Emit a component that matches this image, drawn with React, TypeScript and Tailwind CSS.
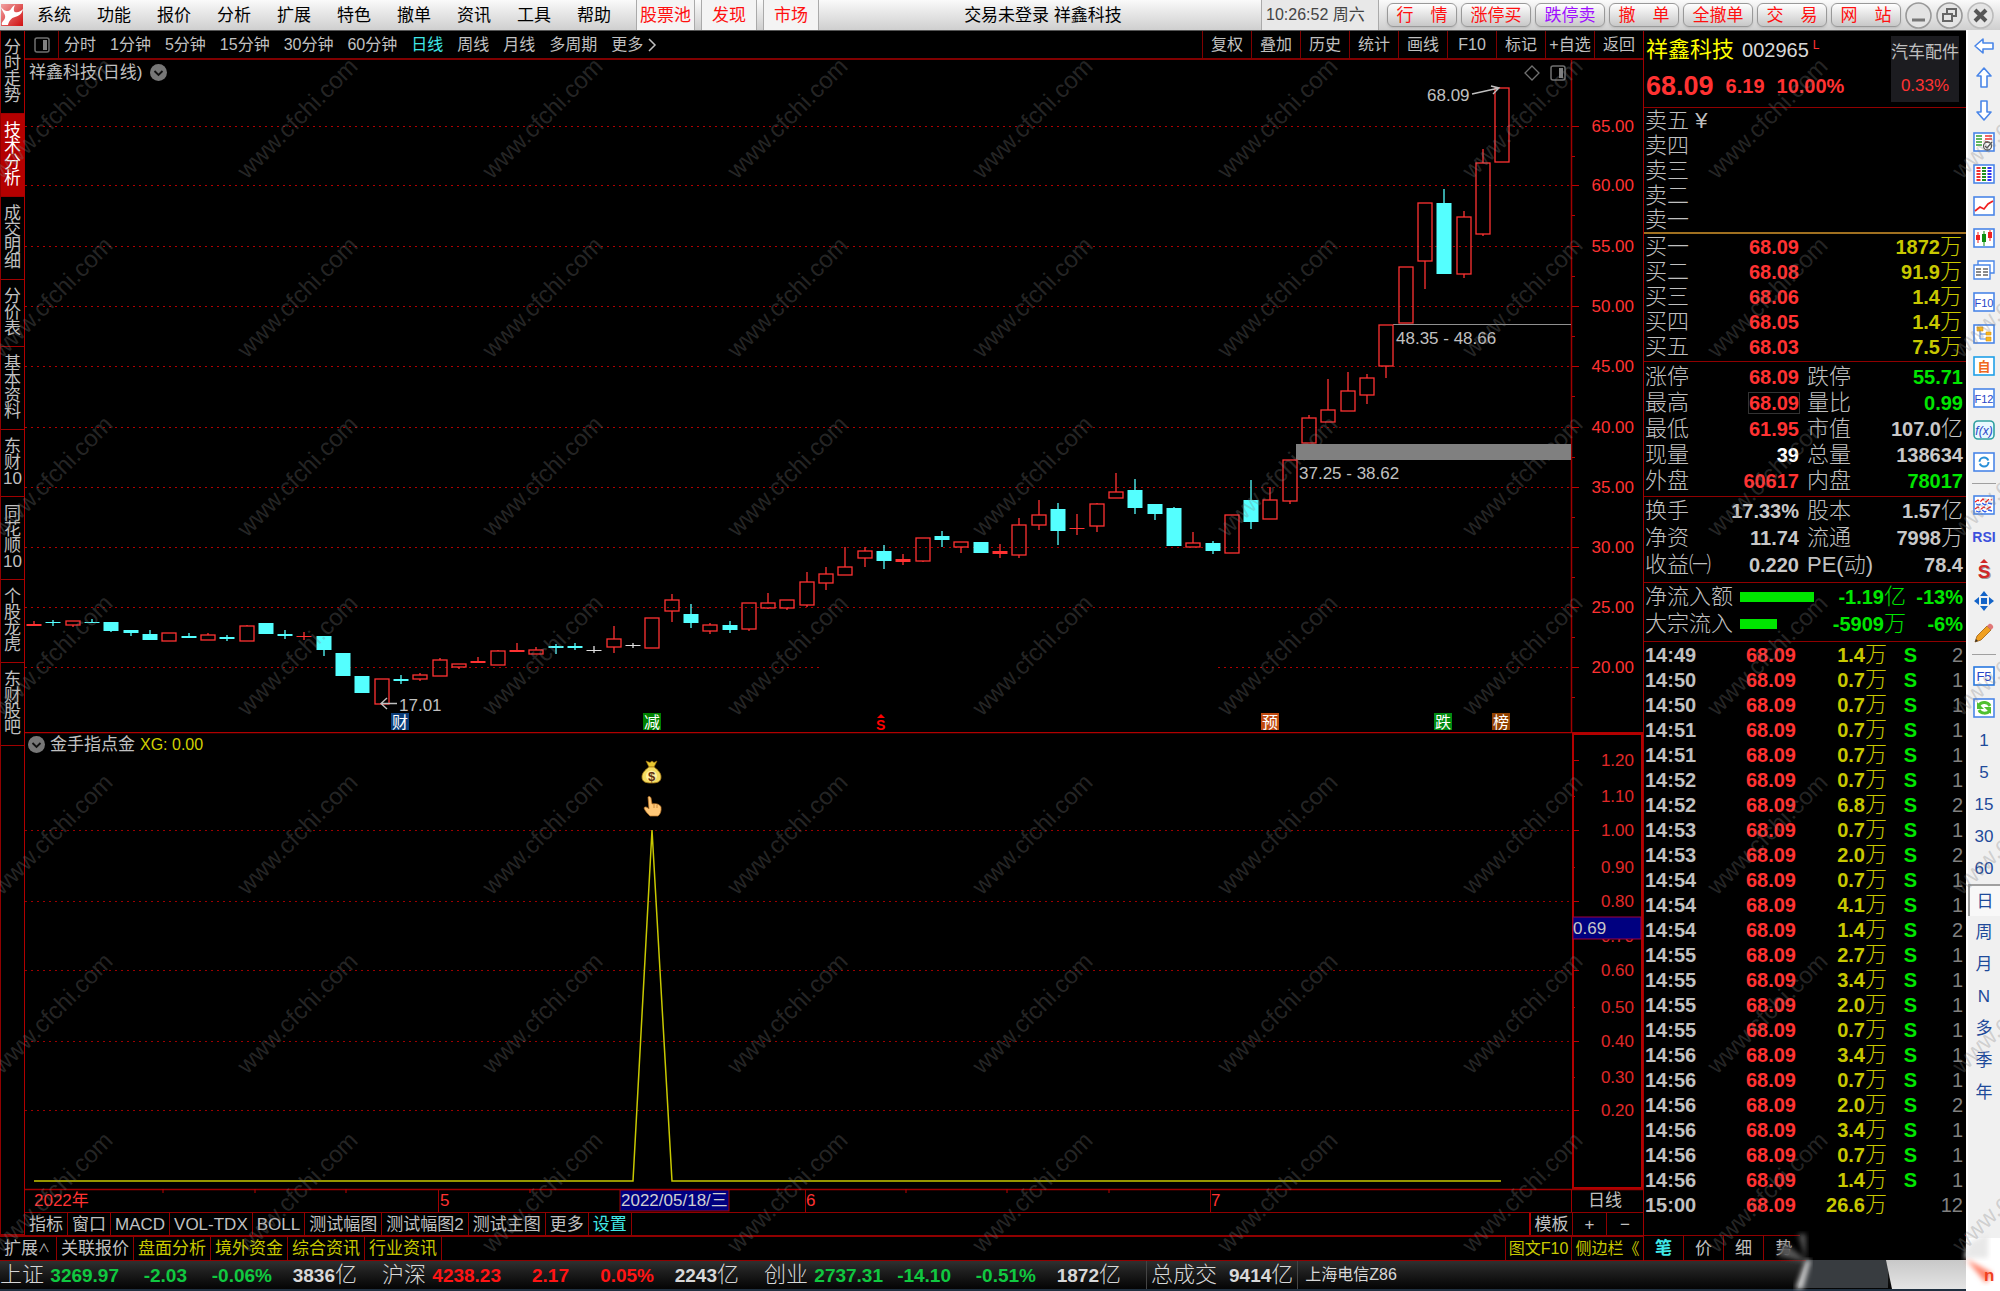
import React from 'react';
import clsx from 'clsx';

const MENU = ['系统', '功能', '报价', '分析', '扩展', '特色', '撤单', '资讯', '工具', '帮助'];
const HOT_MENU = ['股票池', '发现', '市场'];
const QUICK = ['行　情', '涨停买', '跌停卖', '撤　单', '全撤单', '交　易', '网　站'];
const PERIODS = ['分时', '1分钟', '5分钟', '15分钟', '30分钟', '60分钟', '日线', '周线', '月线', '多周期'];
const TOOLS = ['复权', '叠加', '历史', '统计', '画线', 'F10', '标记', '+自选', '返回'];

const SIDE_TABS = [
  ['分', '时', '走', '势'],
  ['技', '术', '分', '析'],
  ['成', '交', '明', '细'],
  ['分', '价', '表'],
  ['基', '本', '资', '料'],
  ['东', '财', '10'],
  ['同', '花', '顺', '10'],
  ['个', '股', '龙', '虎'],
  ['东', '财', '股', '吧'],
];

const INDICATORS = ['指标', '窗口', 'MACD', 'VOL-TDX', 'BOLL', '测试幅图', '测试幅图2', '测试主图', '更多', '设置'];
const EXTENSIONS = ['关联报价', '盘面分析', '境外资金', '综合资讯', '行业资讯'];

// kind, high, body top, body bottom, low
// u = up (hollow red), f = flat up (solid red), d = down (solid cyan), c = doji (white)
type Candle = [string, number, number, number, number];
const CANDLES: Candle[] = [
  ['f', 621, 624, 626, 626], ['d', 620, 622, 623, 626], ['u', 621, 621, 625, 627], ['d', 619, 622, 623, 623],
  ['d', 622, 622, 631, 632], ['d', 630, 630, 633, 636], ['d', 630, 634, 640, 640], ['u', 633, 633, 641, 641],
  ['d', 633, 636, 638, 638], ['u', 633, 635, 640, 640], ['d', 635, 637, 639, 641], ['u', 625, 626, 641, 641],
  ['d', 623, 623, 634, 634], ['d', 630, 634, 636, 639], ['f', 632, 636, 637, 640], ['d', 636, 636, 650, 656],
  ['d', 653, 653, 676, 676], ['d', 676, 676, 693, 693], ['u', 679, 679, 704, 704], ['d', 675, 679, 681, 684],
  ['u', 673, 675, 679, 681], ['u', 658, 660, 676, 676], ['u', 664, 664, 667, 669], ['f', 657, 661, 663, 663],
  ['u', 650, 651, 665, 665], ['f', 643, 650, 652, 652], ['u', 647, 650, 654, 654], ['d', 644, 646, 648, 654],
  ['d', 643, 646, 648, 650], ['c', 646, 650, 651, 653], ['u', 626, 639, 647, 653], ['c', 643, 645, 646, 648],
  ['u', 618, 618, 648, 648], ['u', 594, 600, 611, 622], ['d', 604, 614, 623, 628], ['u', 623, 625, 631, 634],
  ['d', 621, 625, 630, 633], ['u', 603, 603, 629, 631], ['u', 593, 603, 608, 609], ['u', 600, 600, 608, 610],
  ['u', 572, 582, 605, 607], ['u', 567, 574, 583, 590], ['u', 547, 567, 575, 575], ['u', 547, 551, 558, 567],
  ['d', 545, 551, 561, 569], ['f', 554, 559, 562, 565], ['u', 538, 538, 561, 562], ['d', 531, 536, 540, 547],
  ['u', 542, 542, 547, 553], ['d', 542, 542, 553, 553], ['f', 544, 551, 554, 558], ['u', 518, 525, 555, 558],
  ['u', 500, 515, 525, 530], ['d', 503, 509, 531, 545], ['f', 514, 528, 529, 535], ['u', 503, 504, 526, 532],
  ['u', 473, 492, 498, 498], ['d', 479, 490, 508, 514], ['d', 504, 504, 514, 520], ['d', 507, 508, 546, 546],
  ['u', 532, 543, 547, 547], ['d', 541, 543, 551, 554], ['u', 515, 515, 553, 553], ['d', 480, 500, 522, 529],
  ['u', 487, 500, 519, 519], ['u', 460, 460, 501, 504], ['u', 415, 418, 443, 443], ['u', 379, 410, 422, 422],
  ['u', 372, 391, 411, 411], ['u', 374, 378, 395, 404], ['u', 325, 325, 366, 378], ['u', 267, 267, 323, 323],
  ['u', 203, 203, 261, 289], ['d', 189, 203, 274, 274], ['u', 211, 217, 274, 278], ['u', 149, 163, 234, 236],
  ['u', 88, 88, 162, 162],
];

const PRICE_AXIS = [
  ['65.00', 126], ['60.00', 185], ['55.00', 246], ['50.00', 306], ['45.00', 366],
  ['40.00', 427], ['35.00', 487], ['30.00', 547], ['25.00', 607], ['20.00', 667],
] as const;

const XG_AXIS = [
  ['1.20', 760], ['1.10', 796], ['1.00', 830], ['0.90', 867], ['0.80', 901], ['0.70', 936],
  ['0.60', 970], ['0.50', 1007], ['0.40', 1041], ['0.30', 1077], ['0.20', 1110],
] as const;

const MARKS = [
  ['财', 391, '#0a3c78'], ['减', 643, '#008000'], ['预', 1261, '#c04a10'], ['跌', 1434, '#008a10'], ['榜', 1492, '#904000'],
] as const;

const SELLS = ['卖五', '卖四', '卖三', '卖二', '卖一'];
const BUYS = [
  ['买一', '68.09', '1872万'],
  ['买二', '68.08', '91.9万'],
  ['买三', '68.06', '1.4万'],
  ['买四', '68.05', '1.4万'],
  ['买五', '68.03', '7.5万'],
];

const STATS = [
  ['涨停', '68.09', 'red', '跌停', '55.71', 'green'],
  ['最高', '68.09', 'red', '量比', '0.99', 'green'],
  ['最低', '61.95', 'red', '市值', '107.0亿', 'gray'],
  ['现量', '39', 'white', '总量', '138634', 'gray'],
  ['外盘', '60617', 'red', '内盘', '78017', 'green'],
];
const FUNDAMENTALS = [
  ['换手', '17.33%', 'gray', '股本', '1.57亿', 'gray'],
  ['净资', '11.74', 'gray', '流通', '7998万', 'gray'],
  ['收益㈠', '0.220', 'gray', 'PE(动)', '78.4', 'gray'],
];
const TONE: Record<string, string> = {
  red: 'text-[#ff3232]',
  green: 'text-[#00e600]',
  gray: 'text-[#c8c8c8]',
  white: 'text-white',
};

const TICKS = [
  ['14:49', '1.4万', 'S', '2'], ['14:50', '0.7万', 'S', '1'], ['14:50', '0.7万', 'S', '1'], ['14:51', '0.7万', 'S', '1'],
  ['14:51', '0.7万', 'S', '1'], ['14:52', '0.7万', 'S', '1'], ['14:52', '6.8万', 'S', '2'], ['14:53', '0.7万', 'S', '1'],
  ['14:53', '2.0万', 'S', '2'], ['14:54', '0.7万', 'S', '1'], ['14:54', '4.1万', 'S', '1'], ['14:54', '1.4万', 'S', '2'],
  ['14:55', '2.7万', 'S', '1'], ['14:55', '3.4万', 'S', '1'], ['14:55', '2.0万', 'S', '1'], ['14:55', '0.7万', 'S', '1'],
  ['14:56', '3.4万', 'S', '1'], ['14:56', '0.7万', 'S', '1'], ['14:56', '2.0万', 'S', '2'], ['14:56', '3.4万', 'S', '1'],
  ['14:56', '0.7万', 'S', '1'], ['14:56', '1.4万', 'S', '1'], ['15:00', '26.6万', '', '12'],
];

const INDEXES = [
  { name: '上证', last: '3269.97', diff: '-2.03', pct: '-0.06%', amount: '3836亿', up: false },
  { name: '沪深', last: '4238.23', diff: '2.17', pct: '0.05%', amount: '2243亿', up: true },
  { name: '创业', last: '2737.31', diff: '-14.10', pct: '-0.51%', amount: '1872亿', up: false },
];

const PanelIcon = () => (
  <svg className="h-4 w-4" viewBox="0 0 16 16" fill="none">
    <rect x="1" y="1" width="14" height="14" rx="2" stroke="#707070" strokeWidth="1.5" />
    <rect x="9" y="3" width="4" height="10" fill="#808080" />
  </svg>
);

const ChevronDot = () => (
  <svg className="h-[17px] w-[17px]" viewBox="0 0 17 17" fill="none">
    <circle cx="8.5" cy="8.5" r="8.5" fill="#777" />
    <path d="M4.5 7l4 4 4-4" stroke="#111" strokeWidth="1.8" />
  </svg>
);

const Header = () => (
  <header className="flex h-[31px] items-center border-b border-[#555] bg-gradient-to-b from-[#fafafa] to-[#cfcfcf] text-[17px] text-black">
    <svg className="h-[22px] w-6" viewBox="0 0 24 22">
      <defs>
        <linearGradient id="logo" x1="0" y1="0" x2="1" y2="1">
          <stop offset="0" stopColor="#f0a0a0" />
          <stop offset="1" stopColor="#d01010" />
        </linearGradient>
      </defs>
      <rect x="1" y="0" width="22" height="22" fill="url(#logo)" />
      <path d="M1 3c3 4 5 4 7 4 3 0 3-4 7-6-2 4-1 7 0 7 3 1 6-1 8-3-1 5-4 7-8 8-4 1-6 4-7 8H2c-1-3 2-4 3-7 1-4-3-6-4-11z" fill="#fff" />
    </svg>
    <nav className="flex">
      {MENU.map((m) => (
        <button key={m} className="w-15 text-center">{m}</button>
      ))}
    </nav>
    <nav className="ml-3 flex h-full text-[#ff1010]">
      {HOT_MENU.map((m) => (
        <button key={m} className="mr-[6px] h-full border-x border-[#aaa] bg-[#f4f4f4] px-[3px] [&:not(:first-child)]:px-[10px]">{m}</button>
      ))}
    </nav>
    <h1 className="flex-1 text-center">交易未登录 祥鑫科技</h1>
    <time className="flex h-full w-[118px] items-center border-x border-[#aaa] bg-[#e8e8e8] pl-1 text-[16px] text-[#444]">10:26:52 周六</time>
    <div className="flex gap-1 pl-2">
      {QUICK.map((q) => (
        <button
          key={q}
          className={clsx(
            'h-6 w-[70px] rounded-md border border-[#999] bg-gradient-to-b from-white to-[#c8c8c8] text-[17px] shadow-sm',
            q === '跌停卖' ? 'text-[#a010ff]' : 'text-[#ff1010]'
          )}
        >
          {q}
        </button>
      ))}
    </div>
    <div className="flex gap-1 pl-1 pr-[6px]">
      <button aria-label="最小化">
        <svg className="h-[27px] w-[27px]" viewBox="0 0 27 27" fill="none">
          <circle cx="13.5" cy="13.5" r="12.5" fill="#e4e4e4" stroke="#999" strokeWidth="1.6" />
          <path d="M7 18h13" stroke="#777" strokeWidth="3" />
        </svg>
      </button>
      <button aria-label="还原">
        <svg className="h-[27px] w-[27px]" viewBox="0 0 27 27" fill="none">
          <circle cx="13.5" cy="13.5" r="12.5" fill="#e4e4e4" stroke="#999" strokeWidth="1.6" />
          <path d="M7 12h9v7H7zM11 11V7h9v7h-4" stroke="#666" strokeWidth="2" />
        </svg>
      </button>
      <button aria-label="关闭">
        <svg className="h-[27px] w-[27px]" viewBox="0 0 27 27" fill="none">
          <circle cx="13.5" cy="13.5" r="12.5" fill="#e4e4e4" stroke="#bbb" strokeWidth="1.6" />
          <path d="M8 8l11 11M19 8L8 19" stroke="#555" strokeWidth="4" />
        </svg>
      </button>
    </div>
  </header>
);

const Toolbar = () => (
  <div className="flex h-[29px] items-center border-b-2 border-[#800000] text-[#c0c0c0]">
    <button className="flex h-full w-[34px] items-center justify-center border-r border-[#800000]" aria-label="面板">
      <PanelIcon />
    </button>
    <div className="flex flex-1 gap-[14px] pl-[5px]">
      {PERIODS.map((p) => (
        <button key={p} className={clsx(p === '日线' && 'text-[#40e8e8]')}>{p}</button>
      ))}
      <button className="flex items-center gap-1">
        更多
        <svg className="h-[14px] w-[10px]" viewBox="0 0 10 14" fill="none" stroke="#c0c0c0" strokeWidth="1.5">
          <path d="M2 1l6 6-6 6" />
        </svg>
      </button>
    </div>
    {TOOLS.map((t) => (
      <button key={t} className="h-full w-[49px] border-l border-[#800000] text-center">{t}</button>
    ))}
  </div>
);

const CandleShape = ({ c, i }: { c: Candle; i: number }) => {
  const [kind, high, top, bottom, low] = c;
  const x = Math.round(34 + i * 19.32);
  const color = kind === 'd' ? '#54ffff' : kind === 'c' ? '#e0e0e0' : '#ff3232';
  return (
    <g stroke={color} strokeWidth="1.3">
      {high < top && <path d={`M${x} ${high}V${top}`} />}
      {low > bottom && <path d={`M${x} ${bottom}V${low}`} />}
      {kind === 'u' ? (
        <rect x={x - 7} y={top} width="14" height={bottom - top} fill="none" />
      ) : (
        <rect x={x - 7.5} y={top} width="15" height={Math.max(bottom - top, 1)} fill={color} stroke="none" />
      )}
    </g>
  );
};

const PriceChart = () => (
  <section className="relative">
    <svg className="block h-auto w-full" viewBox="25 60 1618 672" fontSize="17">
      {PRICE_AXIS.map(([label, y]) => (
        <g key={label}>
          {label === '20.00' ? (
            <path d={`M25 ${y}.5H823M1218 ${y}.5H1571`} stroke="#b00000" strokeDasharray="2 4" />
          ) : (
            <path d={`M25 ${y}.5H1571`} stroke="#b00000" strokeDasharray="2 4" />
          )}
          <path d={`M1572 ${y}.5h7M1572 ${y + 30}.5h3`} stroke="#c00000" />
          <text x="1634" y={y + 6} textAnchor="end" fill="#ff3232">{label}</text>
        </g>
      ))}
      <path d="M1571.5 60V732" stroke="#a00000" strokeWidth="1.5" />
      <rect x="1296" y="444" width="275" height="16" fill="#808080" />
      <path d="M1393 324.5H1571" stroke="#909090" />
      {CANDLES.map((c, i) => (
        <CandleShape key={i} c={c} i={i} />
      ))}
      <g fill="#c0c0c0">
        <text x="1427" y="101">68.09</text>
        <text x="1396" y="344">48.35 - 48.66</text>
        <text x="1299" y="479">37.25 - 38.62</text>
        <text x="399" y="711">17.01</text>
      </g>
      <path d="M1472 94l27-6M1491 86l8 2-6 6M397 703.5h-16M387 698l-6 5.500 6 5.500" stroke="#c0c0c0" strokeWidth="1.4" fill="none" />
      {MARKS.map(([label, x, color]) => (
        <g key={label}>
          <rect x={x} y="713" width="18" height="17" fill={color} />
          <text x={x + 1} y="728" fontSize="16" fill="#fff">{label}</text>
        </g>
      ))}
      <path d="M881 714l4 4h-8z" fill="#ff0000" />
      <text x="876" y="730" fontSize="14" fontWeight="700" fill="#ff0000">S</text>
      <path d="M1532 66l7 7-7 7-7-7z" fill="none" stroke="#707070" strokeWidth="1.3" />
      <rect x="1551" y="66" width="14" height="14" rx="2" fill="none" stroke="#707070" strokeWidth="1.5" />
      <rect x="1559" y="68" width="4" height="10" fill="#808080" />
    </svg>
    <div className="absolute left-1 top-1 flex items-center gap-2 text-[17px] text-[#c0c0c0]">
      <h2>祥鑫科技(日线)</h2>
      <button aria-label="展开"><ChevronDot /></button>
    </div>
  </section>
);

const IndicatorChart = () => (
  <section className="relative">
    <svg className="block h-auto w-full" viewBox="25 732 1618 480" fontSize="17">
      {XG_AXIS.map(([label, y], i) => (
        <g key={label}>
          {i % 2 === 0 && i > 0 && <path d={`M25 ${y}.5H1571`} stroke="#9c0000" strokeDasharray="2 4" />}
          <path d={i % 2 === 0 ? `M1572 ${y}.5h7` : `M1572 ${y}.5h3`} stroke="#c00000" />
          <text x="1634" y={y + 6} textAnchor="end" fill="#e02828">{label}</text>
        </g>
      ))}
      <path d="M25 732.500H1643" stroke="#b00000" strokeWidth="1.5" />
      <rect x="1573" y="734" width="69" height="454" fill="none" stroke="#b40000" strokeWidth="2" />
      <rect x="1573" y="917" width="68" height="22" fill="#000080" stroke="#a00040" />
      <text x="1573" y="934" fill="#c8c8c8">0.69</text>
      <path d="M34 1181H633L652 830L672 1181H1501" fill="none" stroke="#c8c800" strokeWidth="1.5" />

      {/* money bag */}
      <path d="M646 761l4 1.500 2-1.500 2 1.500 3-1.500-3 6h-5z" fill="#e8c830" stroke="#a07010" strokeWidth=".6" />
      <path d="M649 767h5c4 3 7 6 7 10 0 5-4 6-9.500 6s-9.500-1-9.500-6c0-4 3-7 7-10z" fill="#f4dc60" stroke="#b08018" strokeWidth=".8" />
      <circle cx="651.5" cy="776" r="5.500" fill="#fff0a0" />
      <text x="651.5" y="781" fontSize="13" fontWeight="700" textAnchor="middle" fill="#603010">$</text>

      {/* pointing hand */}
      <path d="M648 797c1-1 2.500-.5 3 1l1 6c3-1 8 0 9 3 .5 4-.5 7-3 9h-8c-2-2-5-5-6-8 1-2 3-1 5 1z" fill="#ffc878" stroke="#c07828" strokeWidth=".7" />
      <path d="M654 804v4M657 805v3" stroke="#c07828" strokeWidth=".8" />

      {/* time axis */}
      <path d="M25 1189.500H1643" stroke="#a00000" strokeWidth="1.500" />
      <path d="M163 1189v4M255 1189v4M346 1189v4M530 1189v4M906 1189v4M1007 1189v4M1109 1189v4" stroke="#c00000" />
      <path d="M438.500 1189V1212M805.500 1189V1212M1210.500 1189V1212M1571.500 1189V1212" stroke="#a00000" />
      <g fill="#ff3232">
        <text x="34" y="1206">2022年</text>
        <text x="440" y="1206">5</text>
        <text x="806" y="1206">6</text>
        <text x="1211" y="1206">7</text>
      </g>
      <rect x="620" y="1190" width="109" height="21" fill="#000080" stroke="#a00000" />
      <text x="621" y="1206" fill="#d0d0d0">2022/05/18/三</text>
      <text x="1588" y="1206" fill="#c0c0c0">日线</text>
    </svg>
    <div className="absolute left-[3px] top-1 flex items-center gap-[5px] text-[17px]">
      <button aria-label="展开指标"><ChevronDot /></button>
      <h2 className="text-[#c0c0c0]">金手指点金</h2>
      <span className="text-[16px] text-[#d0d000]">XG: 0.00</span>
    </div>
  </section>
);

// digits are bold, the unit that follows is larger and light
const Num = ({ text }: { text: string }) => {
  const unit = /[万亿]$/.test(text) ? text.slice(-1) : '';
  return (
    <>
      {unit ? text.slice(0, -1) : text}
      {unit && <span className="text-[22px] font-light">{unit}</span>}
    </>
  );
};

const StatRows = ({ rows }: { rows: string[][] }) => (
  <>
    {rows.map(([a, av, at, b, bv, bt]) => (
      <dl key={a} className={clsx('flex items-center', rows.length > 3 ? 'h-[26px]' : 'h-[27px]')}>
        <div className="flex w-[154px] items-center justify-between">
          <dt>{a}</dt>
          <dd className={clsx('text-[20px] font-bold', TONE[at], a === '最高' && 'outline outline-[#333]')}>{av}</dd>
        </div>
        <div className="flex flex-1 items-center justify-between pl-2">
          <dt>{b}</dt>
          <dd className={clsx('text-[20px] font-bold', TONE[bt])}><Num text={bv} /></dd>
        </div>
      </dl>
    ))}
  </>
);

const QuotePanel = () => (
  <aside className="flex w-[323px] shrink-0 flex-col border-l border-[#a00000] text-[22px] font-light text-[#c0c0c0]">
    <div className="flex h-[77px] items-center justify-between border-b border-[#900000] pl-0.5 pr-[7px]">
      <div className="flex flex-col gap-3">
        <div className="flex items-center">
          <h2 className="font-normal text-[#ffff00]">祥鑫科技</h2>
          <span className="pl-2 text-[20px] font-normal text-[#d8d8d8]">002965</span>
          <span className="self-start pl-1 text-[12px] font-normal text-[#ff3232]">L</span>
        </div>
        <div className="flex items-center gap-3 text-[20px] font-bold text-[#ff3232]">
          <strong className="text-[27px]">68.09</strong>
          <span>6.19</span>
          <span>10.00%</span>
        </div>
      </div>
      <div className="flex h-[66px] w-[68px] flex-col items-center justify-between bg-[#1c1c20] py-2 text-[17px] font-normal">
        <span>汽车配件</span>
        <span className="text-[#ff3232]">0.33%</span>
      </div>
    </div>

    <table className="w-full border-b-2 border-[#a07020]">
      <tbody>
        {SELLS.map((s, i) => (
          <tr key={s} className="h-[25px]">
            <td className="pl-px">{s}{i === 0 && ' ¥'}</td>
          </tr>
        ))}
      </tbody>
    </table>

    <div className="border-b border-[#900000] pb-0.5">
      <table className="w-full table-fixed">
        <tbody>
          {BUYS.map(([name, price, vol]) => (
            <tr key={name} className="h-[25px]">
              <td className="w-[55px] pl-px">{name}</td>
              <td className="w-[100px] text-right text-[20px] font-bold text-[#ff3232]">{price}</td>
              <td className="pr-1 text-right text-[20px] font-bold text-[#c8c800]"><Num text={vol} /></td>
            </tr>
          ))}
        </tbody>
      </table>
    </div>

    <div className="border-b border-[#900000] py-0.5 pl-px pr-[3px]"><StatRows rows={STATS} /></div>
    <div className="border-b border-[#900000] pb-1 pl-px pr-[3px]"><StatRows rows={FUNDAMENTALS} /></div>

    <div className="border-b border-[#900000] pb-1 pl-px pr-[3px]">
      {[['净流入额', '-1.19亿', '-13%', 'w-[74px]'], ['大宗流入', '-5909万', '-6%', 'w-[37px]']].map(([name, v, pct, w]) => (
        <div key={name} className="flex h-[27px] items-center">
          <span className="w-[95px]">{name}</span>
          <span className={clsx('h-[10px] bg-[#00e600]', w)} />
          <span className="flex-1 text-right text-[20px] font-bold text-[#00e600]"><Num text={v} /></span>
          <span className="w-[57px] text-right text-[20px] font-bold text-[#00e600]">{pct}</span>
        </div>
      ))}
    </div>

    <table className="w-full table-fixed text-[20px] font-bold">
      <tbody>
        {TICKS.map(([time, vol, side, n], i) => (
          <tr key={i} className="h-[25px]">
            <td className="w-[62px] pl-px">{time}</td>
            <td className="w-[90px] text-right text-[#ff3232]">68.09</td>
            <td className="w-[91px] text-right text-[#c8c800]"><Num text={vol} /></td>
            <td className="w-[30px] text-right text-[#00e600]">{side}</td>
            <td className="pr-[3px] text-right font-normal text-[#808080]">{n}</td>
          </tr>
        ))}
      </tbody>
    </table>

    <nav className="mt-auto flex h-[26px] border-y border-[#900000] text-[17px] font-normal">
      {['笔', '价', '细', '势'].map((t) => (
        <button key={t} className={clsx('w-10 border-r border-[#900000]', t === '笔' && 'font-bold text-[#40e8e8]', t === '势' && 'border-r-0')}>{t}</button>
      ))}
    </nav>
  </aside>
);

const Boxed = ({ children, stroke = '#4a86e8' }: { children?: React.ReactNode; stroke?: string }) => (
  <svg className="h-5 w-[22px]" viewBox="0 0 22 20" fill="none">
    <rect x="1" y="1" width="20" height="18" fill="#fff" stroke={stroke} strokeWidth="1.6" />
    {children}
  </svg>
);

const Arrow = ({ d }: { d: string }) => (
  <svg className="h-[22px] w-[22px]" viewBox="0 0 22 22" fill="#fff" stroke="#4a86e8" strokeWidth="1.6" strokeLinejoin="round">
    <path d={d} />
  </svg>
);

const RAIL_TOP = [
  <Arrow d="M2 11l8-7v4h10v6H10v4z" />,
  <Arrow d="M11 1l7 8h-4v11H8V9H4z" />,
  <Arrow d="M11 21l7-8h-4V2H8v11H4z" />,
  <Boxed>
    <path d="M3 4h6M3 7h6M3 10h6M3 13h6" stroke="#30a030" strokeWidth="1.5" />
    <path d="M12 4h7M12 7h7M12 10h3" stroke="#f03030" strokeWidth="1.5" />
    <circle cx="14.5" cy="14" r="4" stroke="#555" strokeWidth="1.3" />
    <path d="M12 14l2 2 5-6" stroke="#555" strokeWidth="1.3" />
  </Boxed>,
  <Boxed>
    <path d="M5.500 3v14" stroke="#f03030" strokeWidth="4" strokeDasharray="2 1" />
    <path d="M11 3v14" stroke="#209020" strokeWidth="4" strokeDasharray="2 1" />
    <path d="M16.500 3v14" stroke="#3030f0" strokeWidth="4" strokeDasharray="2 1" />
  </Boxed>,
  <Boxed><path d="M2 15l5-4 4 2 4-5 5-3" stroke="#f02020" strokeWidth="1.700" /></Boxed>,
  <Boxed>
    <path d="M5 4v11M17 2v11" stroke="#f02020" />
    <path d="M11 3v15" stroke="#109010" />
    <path d="M3 7h4v5H3zM15 4h4v6h-4z" fill="#f02020" />
    <path d="M9 6h4v8H9z" fill="#109010" />
  </Boxed>,
  <svg className="h-5 w-[22px]" viewBox="0 0 22 20" fill="#fff" stroke="#4a86e8" strokeWidth="1.4">
    <path d="M5 1h16v12H5z" />
    <path d="M1 5h16v14H1z" />
    <path d="M3 9h5M10 9h5M3 12h5M10 12h5M3 15h5M10 15h5" stroke="#666" />
  </svg>,
  <Boxed><text x="11" y="15" fontSize="11" textAnchor="middle" fill="#2846c8">F10</text></Boxed>,
  <Boxed>
    <path d="M7 6v9h6M7 10h6" stroke="#4a86e8" />
    <path d="M4 3h6v4H4zM13 8h5v3h-5zM13 13h5v4h-5z" fill="#f8b820" stroke="#d89010" strokeWidth=".6" />
  </Boxed>,
  <Boxed stroke="#20a0e8"><text x="11" y="15" fontSize="13" fontWeight="700" textAnchor="middle" fill="#f06820">自</text></Boxed>,
  <Boxed><text x="11" y="15" fontSize="11" textAnchor="middle" fill="#2846c8">F12</text></Boxed>,
  <svg className="h-5 w-[22px]" viewBox="0 0 22 20">
    <rect x="1" y="1" width="20" height="18" rx="4" fill="#e8f8ff" stroke="#30a0a0" strokeWidth="1.600" />
    <text x="11" y="15" fontSize="12" fontStyle="italic" textAnchor="middle" fill="#2846c8">f(x)</text>
  </svg>,
  <Boxed>
    <circle cx="11" cy="10" r="4.500" stroke="#2890d8" strokeWidth="2" strokeDasharray="12 2" />
  </Boxed>,
];

const RAIL_MID = [
  <Boxed>
    <path d="M2 7l3-2 2 2 3-3 3 3 3-3 3 1M2 14l3-2 3 2 3-2 3 2 3-2 2 1" stroke="#f02020" strokeWidth="1.300" strokeDasharray="5 2" />
    <path d="M3 9l3 1 3-2 3 2 3-2 4 1M3 16l3 1 3-2 3 2 3-2 4 1" stroke="#3060f0" strokeWidth="1.300" strokeDasharray="5 2" />
  </Boxed>,
  <span className="text-[14px] font-bold text-[#3c50dc]">RSI</span>,
  <svg className="h-[22px] w-[22px]" viewBox="0 0 22 22">
    <path d="M11 1l4 4H7z" fill="#d02828" />
    <text x="12" y="21" fontSize="19" fontWeight="700" textAnchor="middle" fill="#999">S</text>
    <text x="11" y="20" fontSize="19" fontWeight="700" textAnchor="middle" fill="#d02828">S</text>
  </svg>,
  <svg className="h-[22px] w-[22px]" viewBox="0 0 22 22" fill="#1464c8">
    <path d="M11 1l4 5H7zM11 21l4-5H7zM1 11l5-4v8zM21 11l-5-4v8z" />
    <rect x="8" y="8" width="6" height="6" />
  </svg>,
  <svg className="h-[22px] w-[22px]" viewBox="0 0 22 22">
    <path d="M2 20l2-6L14 4l4 4L8 18z" fill="#f0a020" stroke="#a06010" strokeWidth=".8" />
    <path d="M14 4l2-2c2-1 5 2 4 4l-2 2z" fill="#e07878" />
    <path d="M2 20l1-3 2 2z" fill="#333" />
  </svg>,
];

const RAIL_LOW = [
  <Boxed stroke="#2878e0"><text x="11" y="15" fontSize="13" textAnchor="middle" fill="#2846c8">F5</text></Boxed>,
  <Boxed>
    <path d="M17 8c-2-4-8-5-11-1M6 12c2 4 8 4 11 1" stroke="#50c030" strokeWidth="3" />
    <path d="M4 4v7h7zM18 16V9h-7z" fill="#50c030" />
  </Boxed>,
];

const RAIL_PERIODS = ['1', '5', '15', '30', '60', '日', '周', '月', 'N', '多', '季', '年'];

const RailIcons = ({ icons }: { icons: React.ReactNode[] }) => (
  <>
    {icons.map((icon, i) => (
      <button key={i} className="flex h-8 w-full items-center justify-center">{icon}</button>
    ))}
  </>
);

const RailSep = () => <hr className="mx-1 my-[5px] border-[#a0a0a0]" />;

const IconRail = () => (
  <nav className="-mt-px w-[34px] shrink-0 border-l-2 border-white bg-[#f0f0f0]">
    <RailIcons icons={RAIL_TOP} />
    <RailSep />
    <RailIcons icons={RAIL_MID} />
    <RailSep />
    <RailIcons icons={RAIL_LOW} />
    {RAIL_PERIODS.map((p) => (
      <button
        key={p}
        className={clsx(
          'flex h-8 w-full items-center justify-center text-[17px] text-[#1e4a9a]',
          p === '日' && 'border-l-2 border-t-2 border-[#a0a0a0] bg-[#f8f8f8]'
        )}
      >
        {p}
      </button>
    ))}
  </nav>
);

const StatusBar = () => (
  <footer className="flex h-[30px] items-center border-b-2 border-[#203040] bg-gradient-to-b from-[#303030] to-[#050505] text-[22px] font-light text-[#d8d8d8]">
    {INDEXES.map((x) => (
      <div key={x.name} className="flex w-[382px] items-center">
        <span className="w-[46px]">{x.name}</span>
        <div className={clsx('flex text-right text-[19px] font-bold', x.up ? 'text-[#ff1414]' : 'text-[#10c840]')}>
          <span className="w-[73px]">{x.last}</span>
          <span className="w-[68px]">{x.diff}</span>
          <span className="w-[85px]">{x.pct}</span>
        </div>
        <span className="w-[85px] text-right text-[19px] font-bold"><Num text={x.amount} /></span>
      </div>
    ))}
    <div className="flex h-full items-center gap-3 border-x border-[#444] px-1">
      <span>总成交</span>
      <span className="text-[19px] font-bold"><Num text="9414亿" /></span>
    </div>
    <span className="pl-[7px] text-[16px] font-normal">上海电信Z86</span>
  </footer>
);

// window corners that show through below the quote panel
const CornerArt = () => (
  <svg className="pointer-events-none absolute bottom-0 right-0 h-[60px] w-[230px]" viewBox="1770 1231 230 60">
    <defs>
      <filter id="soft"><feGaussianBlur stdDeviation="2.500" /></filter>
      <linearGradient id="pale" x1="0" y1="0" x2="0" y2="1">
        <stop offset="0" stopColor="#c8c8c8" />
        <stop offset="1" stopColor="#e4e4e4" />
      </linearGradient>
    </defs>
    <rect x="1800" y="1233" width="165" height="26" fill="#000" />
    <path d="M1784 1242l22 18-8-26 8 0v28l-28-6z" fill="#555" filter="url(#soft)" />
    <rect x="1966" y="1238" width="34" height="53" fill="#fff" />
    <path d="M1806 1260H1888V1288H1798z" fill="#383c40" />
    <path d="M1806 1260l-11 29h8l8-29z" fill="#ccc" filter="url(#soft)" />
    <path d="M1886 1260H1966V1289H1892z" fill="url(#pale)" />
    <path d="M1964 1258l6-16 18-8v24z" fill="#e8e8e8" filter="url(#soft)" />
    <path d="M1966 1259l26 14-6 10z" fill="#ff8068" filter="url(#soft)" />
    <text x="1984" y="1281" fontSize="17" fontWeight="700" fill="#f04020">n</text>
  </svg>
);

const Watermark = () => (
  <svg className="pointer-events-none absolute inset-0 h-full w-full" fontSize="24" fill="#808080" fillOpacity=".3">
    {[0, 1, 2, 3, 4, 5, 6].map((row) =>
      [0, 1, 2, 3, 4, 5, 6, 7, 8].map((col) => (
        <text key={`${row}-${col}`} transform={`translate(${col * 245 + 2} ${row * 179 + 180}) rotate(-45)`}>
          www.cfchi.com
        </text>
      ))
    )}
  </svg>
);

export default function App() {
  return (
    <div className="relative overflow-hidden whitespace-nowrap bg-black font-['Liberation_Sans','Noto_Sans_CJK_SC',sans-serif] text-[16px] leading-none">
      <Header />
      <div className="flex">
        <div className="flex min-w-0 flex-1 flex-col">
          <div className="flex">
            <nav className="w-[25px] shrink-0 border-x border-b-2 border-[#900000] border-r-[#b00000]">
              {SIDE_TABS.map((tab, i) => (
                <button
                  key={i}
                  className={clsx(
                    'flex w-full flex-col items-center border-b border-[#a00000] py-[9px] text-[17px] leading-4',
                    i === 1 ? 'bg-[#b40000] text-white' : 'text-[#c0c0c0]'
                  )}
                >
                  {tab.map((ch) => (
                    <span key={ch}>{ch}</span>
                  ))}
                </button>
              ))}
            </nav>
            <main className="min-w-0 flex-1">
              <Toolbar />
              <PriceChart />
              <IndicatorChart />
              <div className="flex h-6 border-y border-[#900000] text-[17px] text-[#c0c0c0]">
                {INDICATORS.map((t) => (
                  <button key={t} className={clsx('border-r border-[#900000] px-1', t === '设置' && 'text-[#40e8e8]')}>{t}</button>
                ))}
                <button className="ml-auto w-[43px] border-l-2 border-[#b00000]">模板</button>
                <button className="w-[35px] border-x border-[#900000]">+</button>
                <button className="w-[36px]">−</button>
              </div>
            </main>
          </div>
          <div className="flex h-[25px] border-y border-[#900000] text-[17px] text-[#c0c0c0]">
            <button className="flex w-[57px] items-center border-r border-[#900000] pl-1">
              扩展<span className="text-[12px]">∧</span>
            </button>
            {EXTENSIONS.map((t, i) => (
              <button key={t} className={clsx('border-r border-[#900000] px-1', i > 0 && 'text-[#c8c800]')}>{t}</button>
            ))}
            <button className="ml-auto w-[67px] border-x border-[#900000] text-[16px] text-[#c8c800]">图文F10</button>
            <button className="w-[71px] text-[16px] text-[#c8c800]">侧边栏《</button>
          </div>
        </div>
        <QuotePanel />
        <IconRail />
      </div>
      <StatusBar />
      <CornerArt />
      <Watermark />
    </div>
  );
}
